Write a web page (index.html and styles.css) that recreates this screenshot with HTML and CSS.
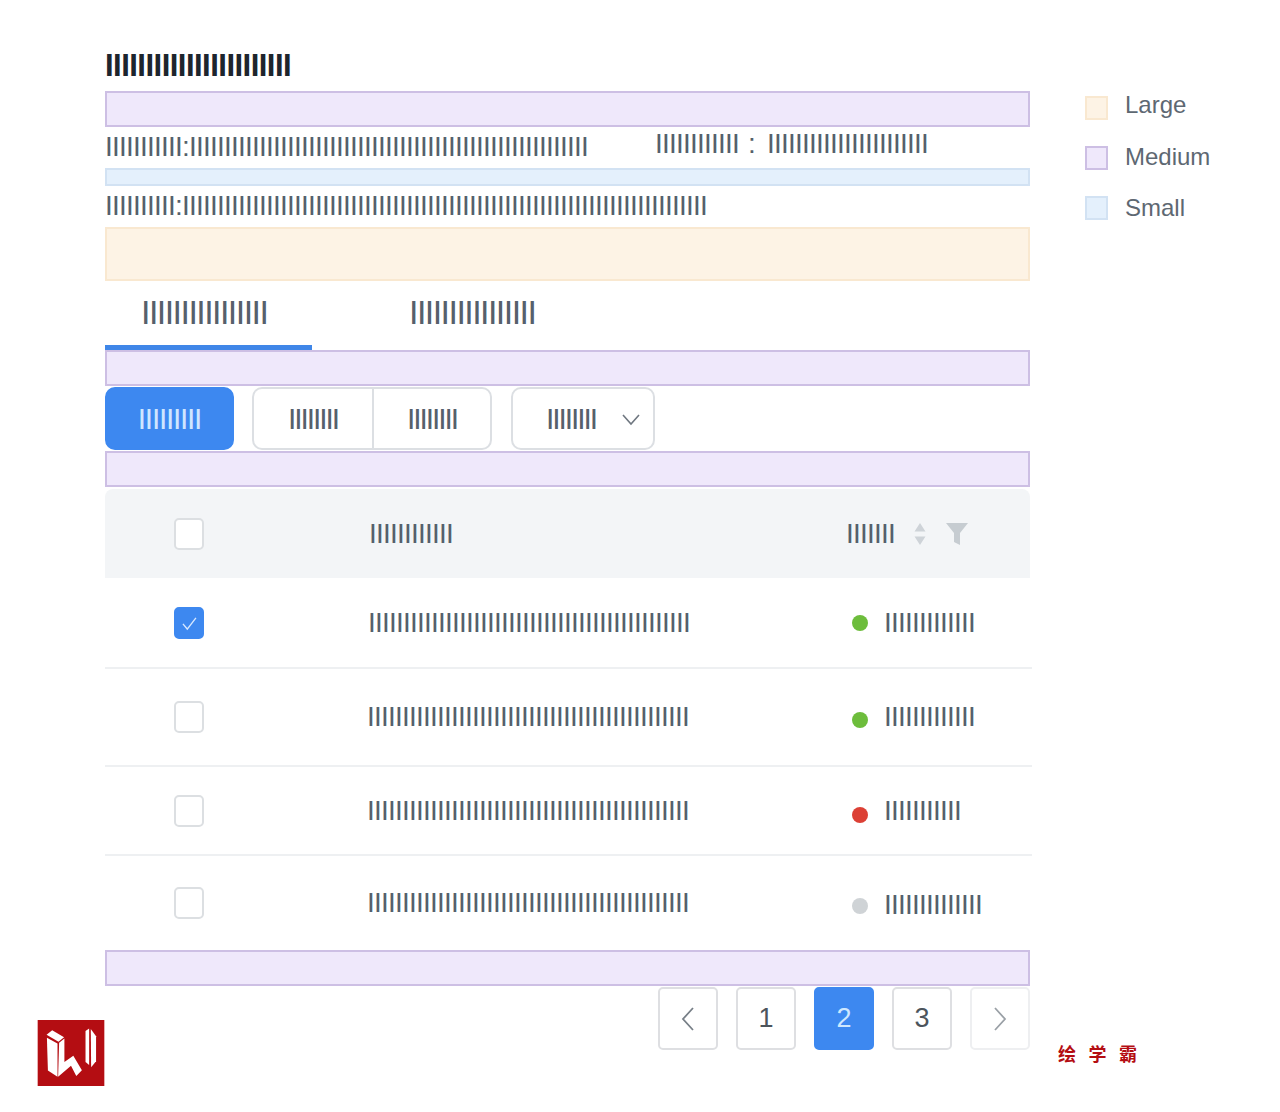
FILE: index.html
```html
<!DOCTYPE html>
<html lang="en">
<head>
<meta charset="utf-8">
<title>Spacing sizes</title>
<link rel="stylesheet" href="styles.css">
</head>
<body>
<div class="page">
  <main class="main">
    <h1 class="title">IIIIIIIIIIIIIIIIIIIIIII</h1>
    <div class="band band-m"></div>
    <div class="info-row">
      <span class="bars info-a">IIIIIIIIIII:IIIIIIIIIIIIIIIIIIIIIIIIIIIIIIIIIIIIIIIIIIIIIIIIIIIIIIIII</span>
      <span class="bars info-b">IIIIIIIIIIII <i class="colon">:</i> IIIIIIIIIIIIIIIIIIIIIII</span>
    </div>
    <div class="band band-s"></div>
    <div class="info-row info-row-single">
      <span class="bars">IIIIIIIIII:IIIIIIIIIIIIIIIIIIIIIIIIIIIIIIIIIIIIIIIIIIIIIIIIIIIIIIIIIIIIIIIIIIIIIIIIIII</span>
    </div>
    <div class="band band-l"></div>
    <nav class="tabs">
      <div class="tab tab-active"><span class="bars bars-tab">IIIIIIIIIIIIIIII</span></div>
      <div class="tab"><span class="bars bars-tab">IIIIIIIIIIIIIIII</span></div>
    </nav>
    <div class="band band-m"></div>
    <div class="toolbar">
      <button class="btn btn-primary"><span class="bars bars-btn">IIIIIIIII</span></button>
      <div class="btn-group">
        <button class="btn btn-seg"><span class="bars bars-btn">IIIIIIII</span></button>
        <button class="btn btn-seg btn-seg-last"><span class="bars bars-btn">IIIIIIII</span></button>
      </div>
      <button class="btn btn-select">
        <span class="bars bars-btn">IIIIIIII</span>
        <svg class="caret" viewBox="0 0 20 14"><path d="M2 2l8 9 8-9"/></svg>
      </button>
    </div>
    <div class="band band-m band-gap"></div>
    <section class="table">
      <div class="row row-head">
        <div class="cell"><span class="check"></span></div>
        <div class="cell cell-name-head"><span class="bars">IIIIIIIIIIII</span></div>
        <div class="cell cell-status-head">
          <span class="bars">IIIIIII</span>
          <svg class="sort" viewBox="0 0 12 24"><path d="M6 1l5.500 8.500H.5zM6 23L.5 14.500h11z"/></svg>
          <svg class="filter" viewBox="0 0 22 24"><path d="M0 1h22l-8 10v12l-6-3V11z"/></svg>
        </div>
      </div>
      <div class="row row-1">
        <div class="cell"><span class="check check-on"><svg viewBox="0 0 30 32"><path d="M8 17l5 6 10-13"/></svg></span></div>
        <div class="cell cell-name-one"><span class="bars">IIIIIIIIIIIIIIIIIIIIIIIIIIIIIIIIIIIIIIIIIIIIII</span></div>
        <div class="cell"><span class="dot dot-green"></span><span class="bars">IIIIIIIIIIIII</span></div>
      </div>
      <div class="row row-2">
        <div class="cell"><span class="check"></span></div>
        <div class="cell"><span class="bars">IIIIIIIIIIIIIIIIIIIIIIIIIIIIIIIIIIIIIIIIIIIIII</span></div>
        <div class="cell"><span class="dot dot-green dot-low-a"></span><span class="bars">IIIIIIIIIIIII</span></div>
      </div>
      <div class="row row-3">
        <div class="cell"><span class="check"></span></div>
        <div class="cell"><span class="bars">IIIIIIIIIIIIIIIIIIIIIIIIIIIIIIIIIIIIIIIIIIIIII</span></div>
        <div class="cell"><span class="dot dot-red dot-low-b"></span><span class="bars">IIIIIIIIIII</span></div>
      </div>
      <div class="row row-4">
        <div class="cell"><span class="check"></span></div>
        <div class="cell"><span class="bars">IIIIIIIIIIIIIIIIIIIIIIIIIIIIIIIIIIIIIIIIIIIIII</span></div>
        <div class="cell"><span class="dot dot-grey dot-low-c"></span><span class="bars bars-low">IIIIIIIIIIIIII</span></div>
      </div>
    </section>
    <div class="band band-m"></div>
    <div class="pager">
      <span class="page-btn"><svg class="chev" viewBox="0 0 14 26"><path d="M12 2L2 13l10 11"/></svg></span>
      <span class="page-btn">1</span>
      <span class="page-btn page-btn-on">2</span>
      <span class="page-btn">3</span>
      <span class="page-btn page-btn-faint"><svg class="chev chev-faint" viewBox="0 0 14 26"><path d="M2 2l10 11L2 24"/></svg></span>
    </div>
  </main>
  <aside class="legend">
    <div class="legend-item"><span class="swatch swatch-l"></span><span class="legend-text legend-text-l">Large</span></div>
    <div class="legend-item"><span class="swatch swatch-m"></span><span class="legend-text legend-text-m">Medium</span></div>
    <div class="legend-item"><span class="swatch swatch-s"></span><span class="legend-text">Small</span></div>
  </aside>
</div>
<svg class="logo" viewBox="51 43 202 200" aria-label="logo">
  <rect x="51" y="43" width="202" height="200" fill="#b40d12"/>
  <g fill="#fff">
    <path d="M78 88l17-14 36 21-17 14z"/>
    <path d="M79 97l32 17v101l-29-19z"/>
    <path d="M116 112l16-13v71l27-19 26 44-17 18-16-31-39 33z"/>
    <path d="M196 76l11-7v110l-11-9z"/>
    <path d="M212 70l16 22v76l-15 18z"/>
  </g>
</svg>
<div class="mark">绘学霸</div>
</body>
</html>
```
FILE: styles.css
```css
* { box-sizing: border-box; }
html, body { margin: 0; padding: 0; background: #fff; }
body { position: relative; height: 1112px; overflow: hidden; font-family: "Liberation Sans", Arial, sans-serif; }

.page { display: flex; align-items: flex-start; padding: 55px 0 0 105px; }
.main { width: 925px; flex: none; display: flex; flex-direction: column; }

.bars {
  font-family: "Liberation Sans", Arial, sans-serif;
  font-size: 28px;
  line-height: 20px;
  height: 20px;
  letter-spacing: -0.78px;
  color: #56606b;
  white-space: nowrap;
  display: block;
}
.title {
  margin: 0 0 14px;
  font-size: 31px;
  font-weight: 700;
  line-height: 22px;
  height: 22px;
  letter-spacing: -0.52px;
  color: #1d252d;
  white-space: nowrap;
}
.colon { font-style: normal; margin: 0 5px 0 2px; }

.band { flex: none; border: 2px solid; }
.band-m { height: 36px; background: #efe8fb; border-color: #cdbfe4; }
.band-s { height: 18px; background: #e4f0fc; border-color: #d2e2f3; }
.band-l { height: 54px; background: #fdf3e5; border-color: #f9e8d0; }
.band-gap { margin-top: 1px; }

.info-row { height: 41px; display: flex; align-items: flex-start; padding-top: 10px; }
.info-row-single { padding-top: 10px; }
.info-a { width: 550px; }
.info-b { margin-top: -3px; }

.tabs { height: 69px; display: flex; }
.tab { padding: 19px 44px 0 36px; }
.tab-active { border-bottom: 5px solid #3f86e8; width: 207px; }
.tab + .tab { margin-left: 61px; }
.bars-tab { font-size: 34px; line-height: 25px; height: 25px; letter-spacing: -1.55px; }

.toolbar { margin-top: 1px; height: 63px; display: flex; gap: 18px; }
.btn { height: 63px; padding: 0; font: inherit; background: #fff; border: 2px solid #dcdfe3; border-radius: 10px; display: flex; align-items: center; justify-content: center; }
.bars-btn { font-size: 30px; line-height: 22px; height: 22px; letter-spacing: -2.1px; }
.btn-primary { width: 129px; background: #3d88f0; border-color: #3d88f0; }
.btn-primary .bars { color: #cfe6ff; letter-spacing: -1.3px; }
.btn-group { width: 240px; display: flex; }
.btn-seg { width: 120px; border-radius: 10px 0 0 10px; border-right: 0; }
.btn-seg-last { border-radius: 0 10px 10px 0; border-left: 2px solid #dcdfe3; border-right: 2px solid #dcdfe3; }
.btn-select { width: 144px; margin-left: 1px; justify-content: flex-start; padding-left: 33px; }
.caret { width: 20px; height: 14px; margin-left: 25px; margin-top: 2px; fill: none; stroke: #6f7780; stroke-width: 1.6; }

.table { margin-top: 2px; display: flex; flex-direction: column; }
.row { display: grid; grid-template-columns: 262px 485px 1fr; align-items: center; margin-right: -2px; border-bottom: 2px solid #eef0f2; }
.cell { display: flex; align-items: center; }
.row .cell:first-child { padding-left: 69px; }
.row-head { height: 89px; background: #f3f5f7; border-bottom: 0; border-radius: 8px 8px 0 0; margin-right: 0; }
.row-1 { height: 91px; }
.row-2 { height: 98px; }
.row-3 { height: 89px; }
.row-4 { height: 94px; border-bottom: 0; }
.cell-name-head { padding-left: 2px; }
.cell-name-one { padding-left: 1px; }
.cell-status-head { margin-left: -6px; }

.check { width: 30px; height: 32px; background: #fff; border: 2px solid #dcdfe2; border-radius: 5px; display: block; }
.check-on { background: #3d88f0; border-color: #3d88f0; }
.check-on svg { display: block; width: 26px; height: 28px; fill: none; stroke: #d5e7ff; stroke-width: 1.6; }

.sort { width: 12px; height: 24px; margin-left: 19px; fill: #ced3d8; }
.filter { width: 22px; height: 24px; margin-left: 20px; fill: #c6ccd1; }

.dot { width: 16px; height: 16px; border-radius: 50%; margin-right: 16px; flex: none; }
.dot-green { background: #6dbd3c; }
.dot-red { background: #dc4035; }
.dot-grey { background: #cfd3d6; }
.dot-low-a { margin-top: 5px; }
.dot-low-b { margin-top: 8px; }
.dot-low-c { margin-top: 6px; }
.bars-low { margin-top: 3px; }

.pager { margin-top: 1px; height: 63px; display: flex; justify-content: flex-end; gap: 18px; }
.page-btn { width: 60px; height: 63px; border: 2px solid #dedfe2; border-radius: 5px; display: flex; align-items: center; justify-content: center; font-size: 27px; color: #4c545c; }
.page-btn-on { background: #3d88f0; border-color: #3d88f0; color: #cfe8ff; }
.page-btn-faint { border-color: #eeeff1; }
.chev { width: 14px; height: 26px; fill: none; stroke: #777f87; stroke-width: 1.8; }
.chev-faint { stroke: #9aa0a6; }

.legend { margin: 41px 0 0 55px; display: flex; flex-direction: column; gap: 26px; }
.legend-item { display: flex; align-items: center; height: 24px; gap: 17px; }
.swatch { width: 23px; height: 24px; border: 2px solid; flex: none; }
.swatch-l { background: #fdf3e5; border-color: #f9e8d0; }
.swatch-m { background: #efe8fb; border-color: #cdbfe4; }
.swatch-s { background: #e4f0fc; border-color: #d2e2f3; }
.legend-text { font-size: 24px; line-height: 24px; color: #5e6872; }
.legend-text-l { margin-top: -6px; }
.legend-text-m { margin-top: -2px; }

.logo { position: absolute; left: 37px; top: 1020px; width: 68px; height: 66px; }
.mark { position: absolute; left: 1058px; top: 1042px; font-family: "Noto Sans CJK SC", sans-serif; font-weight: 700; font-size: 18px; line-height: 22px; letter-spacing: 12.5px; color: #b40d12; white-space: nowrap; }
```
